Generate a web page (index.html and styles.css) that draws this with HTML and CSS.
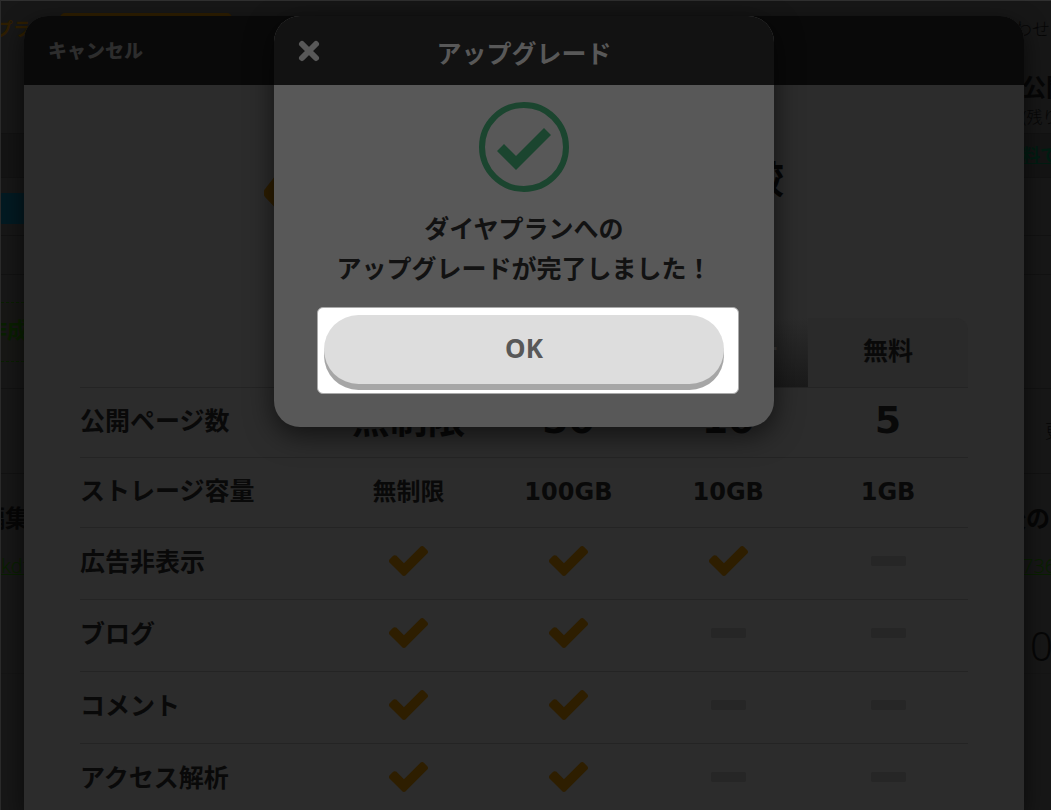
FILE: index.html
```html
<!DOCTYPE html>
<html lang="ja">
<head>
<meta charset="utf-8">
<meta name="viewport" content="width=device-width, initial-scale=1">
<title>アップグレード</title>
<link rel="stylesheet" href="styles.css">
</head>
<body>
<svg class="defs" aria-hidden="true">
  <symbol id="check" viewBox="121 334 1550 1188"><path d="M1671 566q0 40-28 68l-724 724-136 136q-28 28-68 28t-68-28l-136-136-362-362q-28-28-28-68t28-68l136-136q28-28 68-28t68 28l294 295 656-657q28-28 68-28t68 28l136 136q28 28 28 68z"/></symbol>
</svg>

<div class="page">
  <div class="row row-nav"><div class="start orange">プラン</div><div class="tab"></div><div class="end light">わせ</div></div>
  <div class="row row-status"><div class="end pages"><strong>公開</strong><small>(残り</small></div></div>
  <div class="row row-notice"><div class="end"><a class="teal" href="#">料で</a></div></div>
  <div class="row row-action"><div class="start blue"></div></div>
  <div class="row row-gap"></div>
  <div class="row row-create"><div class="start create">作成</div></div>
  <div class="row row-update"><div class="end update">更新</div></div>
  <div class="row row-edit">
    <div class="start stack"><strong>編集</strong><a class="green" href="#">kdf</a></div>
    <div class="end stack"><strong>後の</strong><a class="green" href="#">736</a><span class="count">0</span></div>
  </div>
</div>

<div class="overlay">
  <section class="sheet">
    <header class="sheet-head"><button class="cancel" type="button">キャンセル</button></header>
    <div class="sheet-body">
      <div class="hero">
        <svg class="diamond" viewBox="0 0 60 60" aria-hidden="true"><path d="M1 26 15 8q3-4 8-4h10q5 0 8 4l14 18q3 4 0 8L32 58q-4 4-8 0L1 34q-3-4 0-8z"/></svg>
        <h2>プラン比較</h2>
      </div>
      <table class="plans">
        <thead>
          <tr><td></td><th class="paid" scope="col">ダイヤ</th><th class="paid" scope="col">ビジネス</th><th class="paid" scope="col">レギュラー</th><th class="free" scope="col">無料</th></tr>
        </thead>
        <tbody>
          <tr class="large"><th scope="row">公開ページ数</th><td>無制限</td><td>50</td><td>10</td><td>5</td></tr>
          <tr><th scope="row">ストレージ容量</th><td>無制限</td><td>100GB</td><td>10GB</td><td>1GB</td></tr>
          <tr class="mark"><th scope="row">広告非表示</th><td><svg class="check"><use href="#check"/></svg></td><td><svg class="check"><use href="#check"/></svg></td><td><svg class="check"><use href="#check"/></svg></td><td><i class="dash"></i></td></tr>
          <tr class="mark"><th scope="row">ブログ</th><td><svg class="check"><use href="#check"/></svg></td><td><svg class="check"><use href="#check"/></svg></td><td><i class="dash"></i></td><td><i class="dash"></i></td></tr>
          <tr class="mark"><th scope="row">コメント</th><td><svg class="check"><use href="#check"/></svg></td><td><svg class="check"><use href="#check"/></svg></td><td><i class="dash"></i></td><td><i class="dash"></i></td></tr>
          <tr class="mark"><th scope="row">アクセス解析</th><td><svg class="check"><use href="#check"/></svg></td><td><svg class="check"><use href="#check"/></svg></td><td><i class="dash"></i></td><td><i class="dash"></i></td></tr>
        </tbody>
      </table>
    </div>
  </section>

  <section class="modal" role="dialog" aria-labelledby="modal-title">
    <header class="modal-head">
      <button class="close" type="button" aria-label="閉じる"><svg viewBox="0 0 24 24" aria-hidden="true"><path d="M5 5 19 19M19 5 5 19"/></svg></button>
      <h1 id="modal-title">アップグレード</h1>
    </header>
    <div class="modal-body">
      <svg class="done" viewBox="0 0 90 90" aria-hidden="true"><circle cx="45" cy="45" r="42"/><path d="M18 49 25 42 37 54 65 26 72 33 37 68z"/></svg>
      <p>ダイヤプランへの<br>アップグレードが完了しました！</p>
      <div class="highlight"><button class="ok" type="button">OK</button></div>
    </div>
  </section>
</div>
</body>
</html>
```
FILE: styles.css
```css
* { box-sizing: border-box; }

body {
  margin: 0;
  height: 100vh;
  overflow: hidden;
  position: relative;
  background: #171717;
  color: #060606;
  font-family: "Noto Sans", "Noto Sans CJK JP", sans-serif;
}

button {
  border: 0;
  padding: 0;
  background: none;
  font: inherit;
  font-weight: 700;
  cursor: pointer;
}

h1, h2, p { margin: 0; }
.defs { display: none; }

/* page behind the dialogs */
.page {
  min-height: 100vh;
  border-top: 1px solid #303030;
  border-left: 1px solid #2b2b2b;
}

.row {
  display: flex;
  border-bottom: 1px solid #121212;
  white-space: nowrap;
  line-height: 24px;
}

.start {
  width: 28px;
  display: flex;
  justify-content: flex-end;
  overflow: hidden;
}

.end {
  width: 37px;
  margin-left: auto;
  overflow: hidden;
}

.row-nav { height: 56px; border: 0; align-items: center; font-size: 18px; }
.row-nav .start { width: 48px; }
.orange { color: #2e1e00; font-weight: 700; }
.light { font-weight: 300; }
.tab {
  align-self: flex-start;
  width: 172px;
  height: 24px;
  margin: 12px 0 0 11px;
  border-radius: 5px;
  background: #2e1e00;
}

.row-status { height: 77px; padding-top: 18px; }
.pages { display: flex; flex-direction: column; gap: 6px; padding-left: 8px; font-size: 24px; }
.pages small { font-size: 16px; font-weight: 300; }

.row-notice { height: 44px; background: #141414; align-items: center; }
.teal { color: #001d12; font-weight: 700; font-size: 18px; padding-left: 8px; }
.row-action { height: 58px; padding-top: 15px; }
.blue { height: 31px; background: #031a22; }
.row-gap { height: 39px; }
.row-create { height: 114px; align-items: center; }
.create {
  height: 60px;
  align-items: center;
  padding-bottom: 6px;
  border: 1px dashed #092000;
  border-width: 1px 0;
  background: #171715;
  color: #092000;
  font-size: 22px;
  font-weight: 700;
}
.row-update { height: 85px; align-items: center; font-size: 18px; font-weight: 300; }
.row-update .end { width: 6px; }
.row-edit { height: 200px; padding-top: 32px; font-size: 24px; border-color: #151515; }
.stack { display: flex; flex-direction: column; align-items: flex-end; justify-content: flex-start; gap: 24px; }
.end.stack { align-items: flex-start; }
.end.stack strong { margin-left: -12px; }
.green { color: #092000; font-size: 20px; font-weight: 300; padding-left: 8px; text-decoration-thickness: 1px; }
.count { padding: 20px 0 0 16px; font-size: 40px; line-height: 48px; font-weight: 300; }

/* dialogs */
.overlay {
  position: absolute;
  inset: 16px 27px 0 24px;
}

.sheet {
  height: 100%;
  overflow: hidden;
  border-radius: 24px 24px 0 0;
  background: #2c2c2c;
  box-shadow: 0 8px 24px rgba(0, 0, 0, .6);
}

.sheet-head {
  display: flex;
  align-items: center;
  height: 69px;
  padding: 0 24px 2px;
  background: #090909;
}

.cancel { color: #2d2d2d; font-size: 19px; font-weight: 900; }
.sheet-body { padding: 0 56px; }

.hero {
  display: flex;
  justify-content: space-between;
  align-items: center;
  width: 520px;
  height: 233px;
  margin: 0 auto;
  padding-bottom: 18px;
}
.diamond { width: 60px; height: 60px; fill: #2e1e00; }
.hero h2 { font-size: 38px; padding-bottom: 32px; }

.plans {
  width: 100%;
  table-layout: fixed;
  border-collapse: separate;
  border-spacing: 0;
  font-size: 25px;
  font-weight: 700;
  line-height: 36px;
}
.plans th, .plans td {
  height: 70px;
  padding: 0;
  width: 18%;
  text-align: center;
  border-bottom: 1px solid #242424;
}
.plans th { padding-bottom: 5px; }
.plans tr > :first-child { width: 28%; text-align: left; }
.plans tbody { color: #090909; }
.plans tbody td { padding-bottom: 2px; font-family: "DejaVu Sans", "Noto Sans CJK JP", sans-serif; font-size: 24px; }
.plans tbody .check, .plans tbody .dash { margin: 0 auto; }
.plans .large td { padding-bottom: 5px; font-size: 38px; }
.plans .mark > * { height: 72px; }
.plans .mark td { padding-bottom: 5px; }
.plans .paid { color: #383838; font-size: 20px; background: linear-gradient(#2c2c2c, #1a1a1a); }
.plans .free { color: #090909; background: #2a2a2a; border-radius: 0 12px 0 0; }

.check { display: block; width: 39px; height: 30px; fill: #2e1e00; }
.dash { display: block; width: 35px; height: 10px; border-radius: 2px; background: #262626; }

.modal {
  position: absolute;
  top: 0;
  left: 0;
  right: 0;
  width: 500px;
  max-width: 100%;
  margin: 0 auto;
  overflow: hidden;
  border-radius: 26px;
  background: #585858;
  color: #121212;
  box-shadow: 0 8px 28px rgba(0, 0, 0, .6);
}

.modal-head {
  display: grid;
  grid-template-columns: 24px 1fr 24px;
  align-items: center;
  height: 69px;
  padding: 0 23px;
  background: #121212;
  color: #585858;
}
.modal-head h1 { padding-top: 4px; text-align: center; font-size: 25px; line-height: 36px; }
.close { display: flex; }
.close svg { width: 24px; height: 24px; fill: none; stroke: #585858; stroke-width: 6; stroke-linecap: round; }

.modal-body { padding: 17px 0 33px; }
.done { display: block; width: 90px; height: 90px; margin: 0 auto; fill: #1b452f; }
.done circle { fill: none; stroke: #1b452f; stroke-width: 6; }
.modal-body p {
  margin: 16px 0 19px;
  text-align: center;
  font-size: 25px;
  font-weight: 700;
  line-height: 40px;
}

.highlight {
  margin: 0 35px 0 43px;
  padding: 7px 14px 9px 6px;
  border: 1px solid #aaa;
  border-radius: 6px;
  background: #fff;
}
.ok {
  display: block;
  width: 100%;
  height: 69px;
  padding-bottom: 4px;
  border-radius: 35px;
  background: #ddd;
  box-shadow: 0 6px 0 #a6a6a6;
  color: #585858;
  font-size: 26px;
}
```
